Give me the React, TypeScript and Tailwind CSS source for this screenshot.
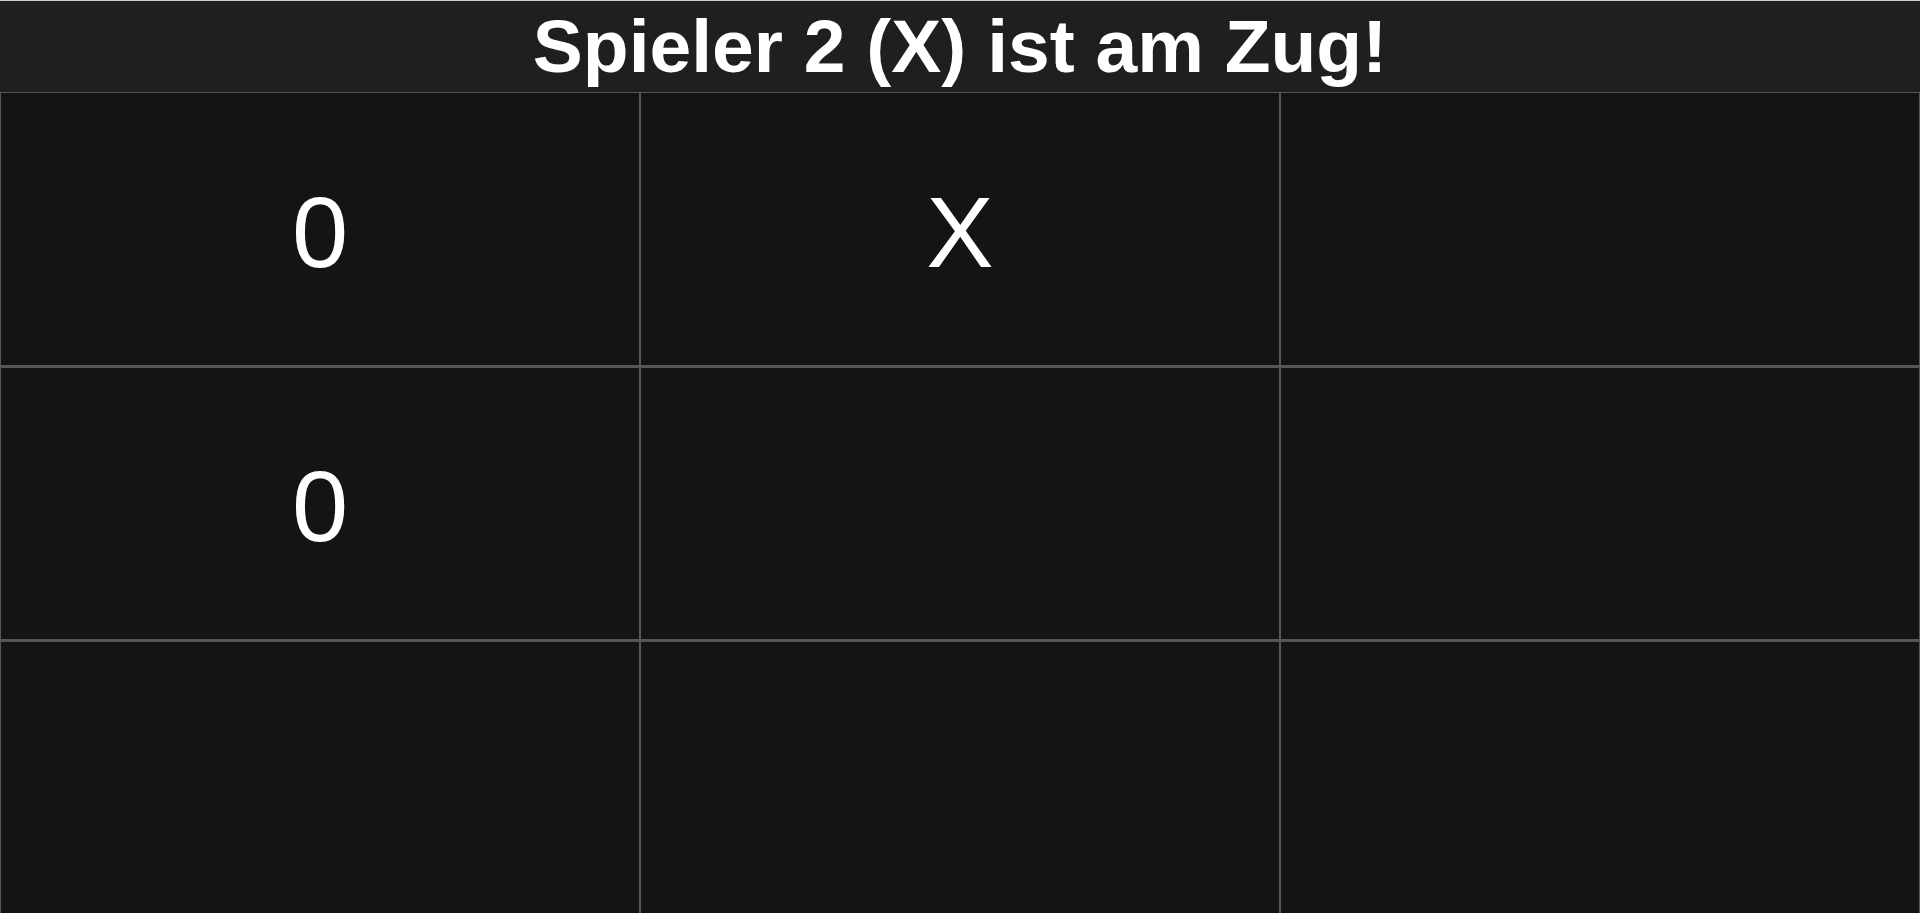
import React from "react";

const cells = ["0", "X", "", "0", "", "", "", "", ""];

export default function App() {
  return (
    <div className="h-[913px] w-full overflow-hidden bg-[#141414]" style={{ fontFamily: '"Liberation Sans", Arial, sans-serif' }}>
      <div className="flex h-[92px] items-center justify-center border-t border-[#cfcfcf] bg-[#1f1f1f]">
        <h1 className="text-[75px] font-bold leading-none text-white">Spieler 2 (X) ist am Zug!</h1>
      </div>
      <div className="grid grid-cols-3 grid-rows-[274px_273px_273px] gap-y-px bg-[#555555]">
        {cells.map((c, i) => (
          <div
            key={i}
            className="flex items-center justify-center border border-[#555555] bg-[#141414] pt-[6px] text-[101px] leading-none text-white"
          >
            {c}
          </div>
        ))}
      </div>
    </div>
  );
}
